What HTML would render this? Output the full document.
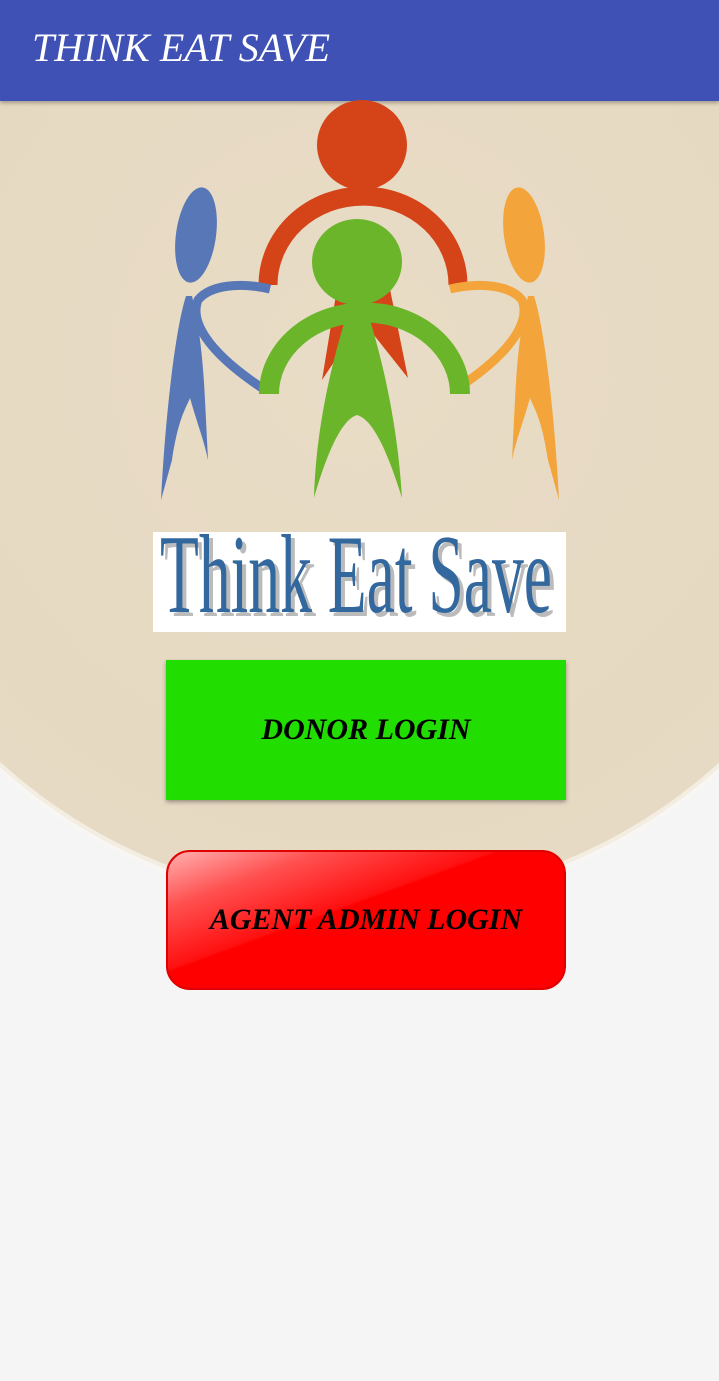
<!DOCTYPE html>
<html><head><meta charset="utf-8"><style>
html,body{margin:0;padding:0}
body{width:719px;height:1381px;background:#f5f5f5;position:relative;overflow:hidden;font-family:"Liberation Serif",serif}
.bg{position:absolute;left:-179px;top:-173px;width:1078px;height:1078px;border-radius:50%;
background:radial-gradient(circle at 50% 50%,#e9dcc6 0%,#e6d9c2 60%,#eadfcb 100%);box-shadow:0 0 0 4px #f3ede2 inset, 0 0 6px 2px #fbf8f2}
.hdr{position:absolute;left:0;top:0;width:719px;height:101px;background:#3f51b5;box-shadow:0 2px 4px rgba(0,0,0,.3)}
.hdr span{position:absolute;left:32px;top:24px;color:#fff;font-style:italic;font-size:40px;letter-spacing:0px}
.btn{position:absolute;left:166px;width:400px;height:140px;display:flex;align-items:center;justify-content:center;font-style:italic;font-weight:bold;font-size:30px;color:#000}
.g{top:660px;background:#22dd00;box-shadow:0 2px 4px rgba(0,0,0,.35)}
.r{top:850px;border-radius:24px;background:linear-gradient(160deg,#ffb0b0 0%,#ff5050 20%,#ff1010 42%,#ff0000 43%,#ff0000 100%);border:2px solid #e00000;box-sizing:border-box}
</style></head><body>
<div class="bg"></div>
<div class="hdr"><span>THINK EAT SAVE</span></div>
<svg style="position:absolute;left:0;top:0" width="719" height="640">
 <!-- red -->
 <path d="M322 380 L345 240 L380 240 L408 378 L362 320 Z" fill="#d44418"/>
 <path d="M268 285 A94 88 0 0 1 458 285" fill="none" stroke="#d44418" stroke-width="19"/>
 <circle cx="362" cy="145" r="45" fill="#d44418"/>
 <!-- blue -->
 <ellipse cx="196" cy="235" rx="20" ry="48" fill="#5877b6" transform="rotate(8 196 235)"/>
 <path d="M186 296 C175 330 165 420 161 500 L172 460 C178 420 185 410 190 398 C196 420 204 440 208 460 L205 400 C203 360 200 330 192 296 Z" fill="#5877b6"/>
 <path d="M270 289 C240 282 210 285 198 300 C190 320 205 350 262 388" fill="none" stroke="#5877b6" stroke-width="9"/>
 <!-- orange -->
 <ellipse cx="524" cy="235" rx="20" ry="48" fill="#f3a43a" transform="rotate(-8 524 235)"/>
 <path d="M534 296 C545 330 555 420 559 500 L548 460 C542 420 535 410 530 398 C524 420 516 440 512 460 L515 400 C517 360 520 330 528 296 Z" fill="#f3a43a"/>
 <path d="M450 289 C480 282 510 285 522 300 C530 320 515 350 458 388" fill="none" stroke="#f3a43a" stroke-width="9"/>
 <!-- green -->
 <path d="M345 320 L370 320 C385 370 398 430 402 498 C390 460 375 420 357 415 C340 420 325 460 314 498 C316 430 330 370 345 320 Z" fill="#6bb52a"/>
 <path d="M269 394 A89 76 0 0 1 460 394" fill="none" stroke="#6bb52a" stroke-width="20"/>
 <ellipse cx="357" cy="262" rx="45" ry="43" fill="#6bb52a"/>
 <!-- text image -->
 <rect x="153" y="532" width="413" height="100" fill="#fff"/>
 <text x="164" y="616" font-family="Liberation Serif" font-size="112" fill="#bbb" textLength="392" lengthAdjust="spacingAndGlyphs">Think Eat Save</text>
 <text x="160" y="612" font-family="Liberation Serif" font-size="112" fill="#33689f" textLength="392" lengthAdjust="spacingAndGlyphs">Think Eat Save</text>
</svg>
<div class="btn g">DONOR LOGIN</div>
<div class="btn r">AGENT ADMIN LOGIN</div>
</body></html>
